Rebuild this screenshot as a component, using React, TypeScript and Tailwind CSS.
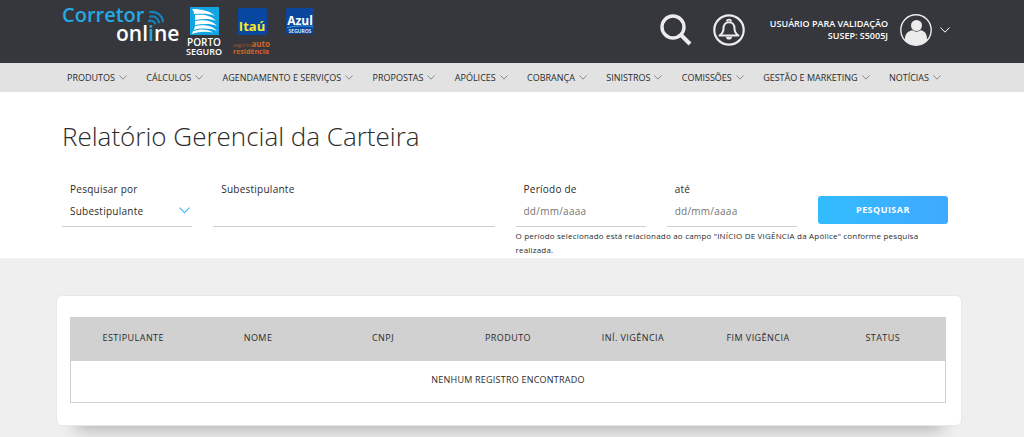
import type { ReactNode } from 'react';

const MENU_ITEMS = [
  'Produtos',
  'Cálculos',
  'Agendamento e serviços',
  'Propostas',
  'Apólices',
  'Cobrança',
  'Sinistros',
  'Comissões',
  'Gestão e marketing',
  'Notícias',
];

const COLUMNS = ['Estipulante', 'Nome', 'CNPJ', 'Produto', 'Iní. vigência', 'Fim vigência', 'Status'];

function Chevron({ className }: { className: string }) {
  return (
    <svg viewBox="0 0 10 6" className={className} fill="none" stroke="currentColor" aria-hidden="true">
      <path d="M0.5 0.5 5 5.2 9.5 0.5" />
    </svg>
  );
}

function CorretorLogo() {
  return (
    <svg width="120" height="50" viewBox="0 0 120 50" role="img" aria-label="Corretor online">
      <text fontSize="20" fontWeight="600" fill="#25a9e4">
        <tspan x="0" y="22">Corretor</tspan>
        <tspan x="54" y="41" fontSize="21" fill="#fff">onl</tspan>
        <tspan fontSize="21">i</tspan>
        <tspan fontSize="21" fill="#fff">ne</tspan>
      </text>
      <g fill="none" stroke="#1583bb" strokeWidth="2.2" strokeLinecap="round">
        <path d="M88 12C94 11 100 15 101 21.500" />
        <path d="M88 16.500C92 15.500 96 18 97 22.500" />
        <path d="M87 21C89 20 92 21 93 23.500" />
      </g>
    </svg>
  );
}

function PortoLogo() {
  return (
    <svg width="40" height="52" viewBox="0 0 40 52" role="img" aria-label="Porto Seguro">
      <rect x="5" width="29" height="28" fill="#12a5e4" />
      <g fill="#fff">
        <path d="M7 2C17 2 25 4 30 9C23 6 16 7 9 7C9 5 8 3 7 2Z" />
        <path d="M10 8C18 7 26 8 31 14C24 11 17 12 10 13Z" />
        <path d="M10 14C18 12.500 27 13 32 19C25 16 17 17 10 18Z" />
        <path d="M10 19C18 17.500 27 18 32 24C25 21 16 21 9 23Z" />
        <path d="M8 24C16 21.500 23 22 28 25.500C20 24 13 25 7 27Z" />
      </g>
      <text textAnchor="middle" fontSize="10" fontWeight="600" fill="#fff">
        <tspan x="19" y="39">PORTO</tspan>
        <tspan x="19" y="48" fontSize="9">SEGURO</tspan>
      </text>
    </svg>
  );
}

function ItauLogo() {
  return (
    <svg width="42" height="52" viewBox="0 0 42 52" role="img" aria-label="Itaú seguros auto residência">
      <rect x="5" y="1" width="29" height="27" rx="2" fill="#08479f" />
      <text x="19" y="24" textAnchor="middle" fontSize="13" fontWeight="700" fill="#fbe92a">Itaú</text>
      <text fontSize="5" fill="#a8532c">
        <tspan x="0" y="40">seguros</tspan>
        <tspan fontSize="8" fontWeight="700" fill="#cf6427">auto</tspan>
        <tspan x="0" y="47" fontSize="7" fontWeight="700" fill="#cf6427">residência</tspan>
      </text>
    </svg>
  );
}

function AzulLogo() {
  return (
    <svg width="28" height="30" viewBox="0 0 28 30" role="img" aria-label="Azul Seguros">
      <rect y="1" width="28" height="26" rx="2" fill="#0a469c" />
      <path d="M1 20.500C10 18.500 20 18.500 27 19.500" fill="none" stroke="#3ea0dd" />
      <text textAnchor="middle" fontSize="12" fontWeight="700" fill="#fff">
        <tspan x="14" y="18">Azul</tspan>
        <tspan x="14" y="26" fontSize="5" fontWeight="600">SEGUROS</tspan>
      </text>
    </svg>
  );
}

function SearchIcon() {
  return (
    <svg width="32" height="32" viewBox="0 0 32 32" fill="none" stroke="#ececec" aria-hidden="true">
      <circle cx="13" cy="13" r="11" strokeWidth="3.400" />
      <path d="M21 21 30 30" strokeWidth="4" />
    </svg>
  );
}

function BellIcon() {
  return (
    <svg width="32" height="32" viewBox="0 0 32 32" fill="none" stroke="#ececec" aria-hidden="true">
      <circle cx="16" cy="16" r="14.700" strokeWidth="2.200" />
      <path
        d="M6.500 21.500C9.500 19.500 10.500 18 10.500 14.500C10.500 10.800 12.800 8.200 16 8.200S21.500 10.800 21.500 14.500C21.500 18 22.500 19.500 25.500 21.500Z"
        strokeWidth="2"
        strokeLinejoin="round"
      />
      <path d="M14 7.500C14 5 18 5 18 7.500" strokeWidth="1.800" />
      <path d="M12.800 22.700C13.300 26.500 18.700 26.500 19.200 22.700Z" fill="#ececec" stroke="none" />
    </svg>
  );
}

function UserIcon() {
  return (
    <svg width="32" height="32" viewBox="0 0 32 32" aria-hidden="true">
      <circle cx="16" cy="16" r="15.200" fill="none" stroke="#ececec" strokeWidth="1.400" />
      <circle cx="16.500" cy="11.500" r="5.500" fill="#ececec" />
      <path d="M5 27V25C5 19.500 8.500 17 12.500 16.300C14.500 18.200 18.500 18.200 20.500 16.300C24.500 17 27 19.500 27 25V27C21 32.500 11 32.500 5 27Z" fill="#ececec" />
    </svg>
  );
}

function Field({ id, label, className = '', children }: { id: string; label: string; className?: string; children: ReactNode }) {
  return (
    <div className={`flex flex-col ${className}`}>
      <label htmlFor={id} className="px-2 text-[10px] leading-4 tracking-wide">
        {label}
      </label>
      <div className="relative mt-0.5 border-b border-[#cfcfcf]">{children}</div>
    </div>
  );
}

const inputClass =
  'block h-6 mb-[3px] w-full bg-transparent px-2 text-[10px] leading-4 tracking-wide outline-none placeholder:text-[#757575]';

export default function App() {
  return (
    <div className="flex min-h-screen flex-col bg-[#efefef] font-['Open_Sans',sans-serif] text-[#2b2b2b]">
      <header className="flex h-[63px] items-start justify-between bg-[#35373d] pr-[74px] pl-[62px] text-white">
        <a href="#inicio" className="flex items-start">
          <CorretorLogo />
          <span className="mt-[7px] ml-[3px]"><PortoLogo /></span>
          <span className="mt-[7px] ml-2"><ItauLogo /></span>
          <span className="mt-[7px] ml-[11px]"><AzulLogo /></span>
        </a>
        <div className="flex h-[59px] items-center">
          <button type="button" aria-label="Buscar"><SearchIcon /></button>
          <button type="button" aria-label="Notificações" className="ml-[21px]"><BellIcon /></button>
          <button type="button" className="ml-[25px] flex items-center">
            <span className="text-right text-[9px] leading-3 font-semibold">
              USUÁRIO PARA VALIDAÇÃO
              <br />
              SUSEP: S5005J
            </span>
            <span className="ml-3"><UserIcon /></span>
            <Chevron className="ml-2 w-[10px]" />
          </button>
        </div>
      </header>

      <nav className="flex h-[29px] items-center justify-between bg-[#e2e2e2] pr-[83px] pl-[67px]">
        {MENU_ITEMS.map((item) => (
          <a key={item} href="#menu" className="flex items-center gap-1 text-[9px] whitespace-nowrap uppercase">
            {item}
            <Chevron className="w-2 text-[#777]" />
          </a>
        ))}
      </nav>

      <main className="flex grow flex-col">
        <section className="bg-white pt-7 pr-[76px] pb-px pl-[62px]">
          <h1 className="text-[26px] leading-8 font-light">Relatório Gerencial da Carteira</h1>

          <form className="mt-[29px] grid grid-cols-6 gap-x-[21px]" onSubmit={(e) => e.preventDefault()}>
            <Field id="tipo" label="Pesquisar por">
              <select id="tipo" className={`${inputClass} appearance-none`}>
                <option>Subestipulante</option>
              </select>
              <Chevron className="pointer-events-none absolute top-2 right-[2px] w-[11px] text-[#3fb8ea]" />
            </Field>
            <Field id="subestipulante" label="Subestipulante" className="col-span-2">
              <input id="subestipulante" type="text" className={inputClass} />
            </Field>
            <Field id="de" label="Período de">
              <input id="de" type="text" placeholder="dd/mm/aaaa" className={inputClass} />
            </Field>
            <Field id="ate" label="até">
              <input id="ate" type="text" placeholder="dd/mm/aaaa" className={inputClass} />
            </Field>
            <button
              type="submit"
              className="mb-[3px] h-7 self-end rounded-[3px] bg-linear-to-r from-[#32bcff] to-[#3fa9ff] text-[9px] font-bold tracking-wider text-white"
            >
              PESQUISAR
            </button>
            <p className="col-span-3 col-start-4 mt-0.5 pr-5 text-[8px] leading-[14px] tracking-wide">
              O período selecionado está relacionado ao campo "INÍCIO DE VIGÊNCIA da Apólice" conforme pesquisa
              realizada.
            </p>
          </form>
        </section>

        <section className="mt-[37px] mr-[62px] mb-3 ml-14 rounded-md border border-[#e8e8e8] bg-white pt-[21px] pr-[15px] pb-[22px] pl-[13px] shadow-[0_24px_16px_-20px_rgba(0,0,0,0.25)]">
          <table className="w-full table-fixed border-collapse border border-[#d1d1d1] text-center text-[9px] uppercase">
            <thead className="bg-[#d1d1d1]">
              <tr className="h-[43px]">
                {COLUMNS.map((column) => (
                  <th key={column} scope="col" className="pb-1 font-medium tracking-wider">
                    {column}
                  </th>
                ))}
              </tr>
            </thead>
            <tbody>
              <tr className="h-[42px]">
                <td colSpan={COLUMNS.length} className="pb-1 tracking-wide">
                  Nenhum registro encontrado
                </td>
              </tr>
            </tbody>
          </table>
        </section>
      </main>
    </div>
  );
}
